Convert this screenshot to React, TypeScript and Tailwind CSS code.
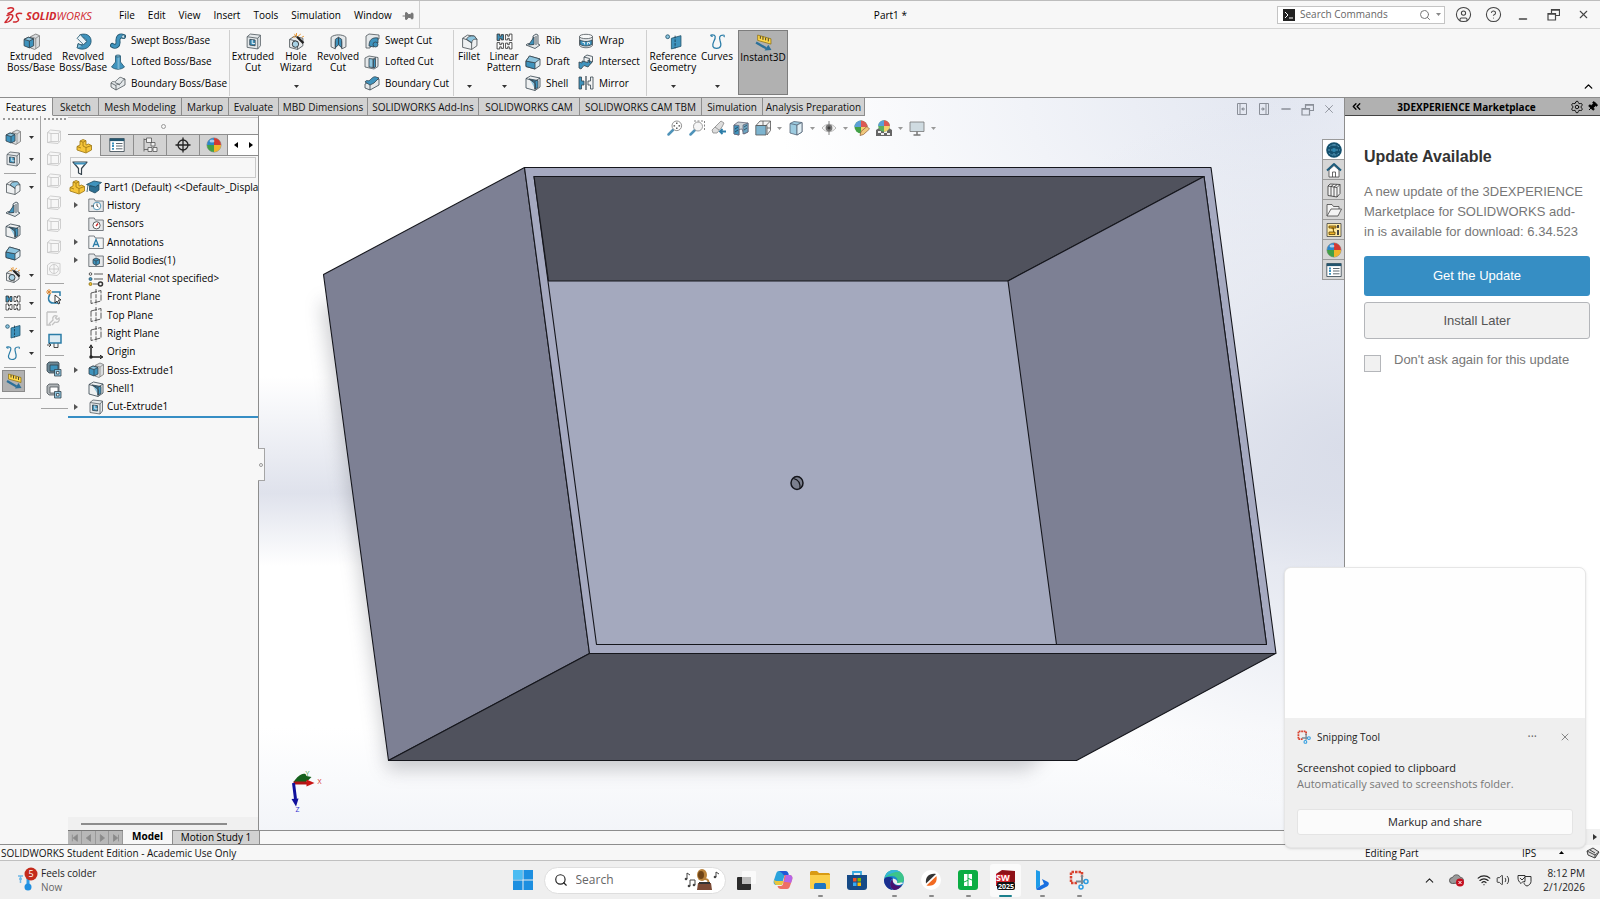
import React, { useState } from 'react';
import { ChevronUp, ChevronsLeft, CircleHelp, CircleUser, Minus, Pin, Search, Settings, Volume2, Wifi, X } from 'lucide-react';

const INK = '#34424c';
const BLUE = '#3f93bd';
const SKY = '#8cc4de';
const PALE = '#e4e8ea';

const ICONS = {
  extrude: (
    <g stroke={INK} strokeLinejoin="round">
      <path d="M7 3.500 12 1l3.500 1.500v10L11 15.500 7 14z" fill="#d9dcde" stroke="#777" />
      <path d="M12 5v10M12 5l3.500-2.500M12 5 7 3.500" fill="none" stroke="#888" />
      <path d="M1 6l4-2 5 1.500v6.500L6 14l-5-2z" fill={BLUE} />
      <path d="M1 6l4-2 5 1.500L6 7.500z" fill={SKY} />
      <path d="M6 7.500V14" />
    </g>
  ),
  revolve: (
    <g stroke="#23566f" strokeLinejoin="round">
      <path d="M5 1.500C12-.5 16 4 15 9c-1 5-7 8-13 5l1-4c3 2 7 1 7.500-2C11 5 8 4 5 5z" fill={BLUE} />
      <path d="M2 5l3-3.500L11 8l-3 3z" fill="#e8f3f8" />
      <path d="M2 14l1-4 4 2" fill={SKY} />
    </g>
  ),
  sweep: (
    <g fill="none" strokeLinecap="round">
      <path d="M2.500 12.500c3 2 6 0 5.500-4C7.500 4 10 2 13.500 3.500" stroke="#23566f" strokeWidth="5" />
      <path d="M2.500 12.500c3 2 6 0 5.500-4C7.500 4 10 2 13.500 3.500" stroke={BLUE} strokeWidth="3.200" />
      <circle cx="13.300" cy="3.600" r="1.600" fill="#cfe5f0" stroke="#23566f" strokeWidth=".6" />
    </g>
  ),
  loft: (
    <g stroke="#23566f" strokeLinejoin="round">
      <path d="M5.500 2h5v6l4 5c-4 3-9 3-13 0l4-5z" fill={BLUE} />
      <path d="M8.500 2v13" stroke="#77b5d3" strokeWidth="2" />
      <ellipse cx="8" cy="2" rx="2.500" ry="1" fill={SKY} />
    </g>
  ),
  boundary: (
    <g stroke="#4d5459" strokeLinejoin="round">
      <path d="M1 8c2-3 3 0 5-2s4-5 6-3l3 1v6l-9 5-5-3z" fill={PALE} />
      <path d="M1 8l5 2.500c2-3 3 0 5-2.500 1-2 2-3 4-4M6 10.500V15M5 7.500l5 2.500" fill="none" />
    </g>
  ),
  boundaryCut: (
    <g stroke={INK} strokeLinejoin="round">
      <path d="M1 9l5-3 9-2v6l-9 5-5-2z" fill={PALE} />
      <path d="M1 7c2-3 3 0 5-2s4-4 6-3l3 1-5 5-4 2z" fill={BLUE} />
      <path d="M6 10v5" />
    </g>
  ),
  cut: (
    <g stroke="#555e64" strokeLinejoin="round">
      <path d="M2 3.500 5 1l9.500 1v10L12 15 2 13.500z" fill={PALE} />
      <path d="M2 3.500 12 5v10M12 5l2.500-3" fill="none" />
      <path d="M4.500 6l5 .6v5.400l-5-.6z" fill={BLUE} stroke={INK} />
      <path d="M6.800 6.500v3.400h2.600" fill="none" stroke="#fff" />
    </g>
  ),
  hole: (
    <g strokeLinejoin="round">
      <path d="M1.500 6 6 3l8 2v7l-5 3.500-7.500-2z" fill="#e9ebec" stroke="#4d5459" />
      <path d="M1.500 6 9 8v7.500" fill="none" stroke="#4d5459" />
      <circle cx="7" cy="10.500" r="3" fill="#a9d2e5" stroke="#222" />
      <path d="M8.500 3.500l6 6" stroke="#222" strokeWidth="2.200" />
      <path d="M8 0v3M4.500 3.500l2.500.5M6 .8 7.500 3M12 1l-2.500 2M13 4l2-1" stroke="#e88c1a" />
    </g>
  ),
  revolveCut: (
    <g stroke="#4d5459" strokeLinejoin="round">
      <path d="M1 4c3-3 11-3 14 0v9l-4 2V8L8 6 5 8v7l-4-2z" fill={PALE} />
      <path d="M5 6l3-2 3 2v8l-3-3-3 3z" fill={BLUE} stroke={INK} />
      <path d="M8 4v7" stroke={INK} />
    </g>
  ),
  sweepCut: (
    <g stroke="#4d5459" strokeLinejoin="round">
      <path d="M2 3l3-2 10 1v4l-6 1-3 8H2z" fill={PALE} />
      <path d="M5 13c0-6 3-9 9-8v5c-3-.5-4 1-4 4z" fill={BLUE} stroke={INK} />
      <circle cx="11.500" cy="11.500" r="2.500" fill={BLUE} stroke={INK} />
    </g>
  ),
  loftCut: (
    <g stroke="#4d5459" strokeLinejoin="round">
      <path d="M1 4l4-2 9 1.500v9L10 15l-9-2z" fill={PALE} />
      <path d="M5 4.500l4 .5v8.500L5 13zM9 5l3-1.500" fill={SKY} stroke={INK} />
      <path d="M9.500 5.500l2-1V13l-2 1z" fill={BLUE} stroke={INK} />
    </g>
  ),
  fillet: (
    <g stroke="#4d5459" strokeLinejoin="round">
      <path d="M1.500 5 6 2l6.500.8 2.500 3V12l-5 3.500-8.500-2z" fill="#eef0f1" />
      <path d="M5 6c1-2.500 3.500-3.500 7.500-3.200L15 6c-2.500-.5-4.500 0-5 3.500z" fill={SKY} />
      <path d="M1.500 5 6 6.500l4 2.500v6.500" fill="none" />
    </g>
  ),
  pattern: (
    <g fill="#fff" stroke="#333" strokeLinejoin="round">
      <path d="M1 1h2.500v2H5V1.500h2v5H5V5H3.500v2H1z" fill={BLUE} />
      <path d="M15 1h-2.500v2H11V1.500H9v5h2V5h1.500v2H15z" />
      <path d="M1 9h2.500v2H5V9.500h2v5H5V13H3.500v2H1z" />
      <path d="M15 9h-2.500v2H11V9.500H9v5h2V13h1.500v2H15z" />
    </g>
  ),
  rib: (
    <g stroke={INK} strokeLinejoin="round">
      <path d="M8 3l3-2 2 1v9l2 1-5 3.500L1 12l2-1.500 5 1z" fill={PALE} />
      <path d="M9 4v7.500L3.500 12z" fill={BLUE} />
      <path d="M11 3v9" fill="none" />
    </g>
  ),
  draft: (
    <g stroke={INK} strokeLinejoin="round">
      <path d="M1 7l3.500-5 10.500 3v6.500L10 15 1 12.500z" fill="#d9e9f1" />
      <path d="M1 7l9 1.800V15l-9-2.500z" fill={BLUE} />
      <path d="M1 7l3.500-5L15 5l-5 3.800z" fill={SKY} />
    </g>
  ),
  shell: (
    <g stroke={INK} strokeLinejoin="round">
      <path d="M1 3.500 5.500 1 15 3v9l-5 3.500L1 13z" fill="#eef0f1" />
      <path d="M4.500 4 13 5.500v7L10 14V8.500z" fill={BLUE} />
      <path d="M4.500 4 10 8.500V14" fill={SKY} />
      <path d="M1 3.500l9 2.800V15.500M10 6.300 15 3" fill="none" />
    </g>
  ),
  wrap: (
    <g stroke="#4d5459">
      <path d="M1.500 3.500v9c2 3 11 3 13 0v-9z" fill={PALE} />
      <ellipse cx="8" cy="3.500" rx="6.500" ry="2.200" fill="#f7f8f8" />
      <path d="M2 7c4 2 8 2 12 0v4.500c-4 2-8 2-12 0z" fill={BLUE} stroke={INK} />
      <path d="M4.500 9.500h2v2M9.500 11.500v-2h2v1.500" stroke="#fff" fill="none" />
    </g>
  ),
  intersect: (
    <g stroke={INK} strokeLinejoin="round">
      <path d="M6 3l3-2 5.500 1.500V8L12 10 6 8.500z" fill="#eef0f1" />
      <path d="M1 8l3 1V7l6 1.500V6l4 2-4 5-4-1.500L3 15l-2-1z" fill={BLUE} />
      <path d="M6 3l5.500 1.500V9" fill="none" />
    </g>
  ),
  mirror: (
    <g stroke={INK}>
      <path d="M1 2h2.500v4H6v4H3.500v4H1z" fill={BLUE} />
      <path d="M8 1v14" strokeWidth="1.200" />
      <path d="M15 2h-2.500v4H10v4h2.500v4H15z" fill="#f2f2f2" />
    </g>
  ),
  refgeo: (
    <g stroke="#23566f" strokeLinejoin="round">
      <circle cx="2.500" cy="3.500" r="1.800" fill={SKY} />
      <path d="M6 5l9-2.500v10L6 15z" fill={BLUE} />
      <path d="M9.500 2.500v12" stroke="#16394b" strokeDasharray="2.500 1" />
    </g>
  ),
  curves: (
    <g fill="none" stroke="#2b7da8" strokeWidth="1.200">
      <path d="M1.500 2C7 1 6.500 4 4.500 8c-2 4-1 6.500 2.500 6.500 5 0 4.500-4 3.500-7C9.500 4 9.500 2 13.500 2" />
      <path d="M1.500 2c.5 1 1.500 1.200 2 1.200M13.500 2c1 0 1 1 .5 1.800" />
    </g>
  ),
  instant: (
    <g strokeLinejoin="round">
      <path d="M2.500 1 15 4.500v5L2.500 6z" fill="#ffd84a" stroke="#8a6d10" strokeWidth=".7" />
      <path d="M5 2v2.500M7.500 2.500v3M10 3.500v2.500M12.500 4v3" stroke="#222" />
      <path d="M1 8l9.500 5.500" stroke="#2c7099" strokeWidth="2.200" />
      <path d="M9 15.500l6.500-.5-3-5z" fill="#2c7099" />
    </g>
  ),
  wire: (
    <g fill="none" stroke="#c4c4c4" strokeLinejoin="round">
      <path d="M1.500 3.500 4.500 1l10 1v9.500L12 14.500l-10.500-1z" />
      <path d="M5 4.500h7.500v8H5zM1.500 3.500 5 4.500M12.500 4.500l2-2.500M1.500 13.500l3.500-1" />
    </g>
  ),
  wireRound: (
    <g fill="none" stroke="#c4c4c4">
      <path d="M1.500 4 5 1.500l9 1V12l-3 2.500-9.500-1z" />
      <circle cx="8" cy="8" r="4.500" />
      <path d="M8 3.500v9M3.500 8h9" />
    </g>
  ),
  selectSketch: (
    <g fill="none">
      <path d="M4 5c-3 5-1 9 3 9h7M6 3h8v4" stroke="#2b7da8" strokeWidth="1.500" />
      <path d="M3 0v6M0 3h6M1 1l4 4M5 1 1 5" stroke="#d9822b" strokeWidth=".9" />
      <path d="M9 6v8l2-2 1.500 3 1.200-.8L12.500 11H15z" fill="#fff" stroke="#222" strokeWidth=".9" />
    </g>
  ),
  repair: (
    <g fill="none" stroke="#c2c2c2" strokeWidth="1.300">
      <path d="M1 1h10M1 1v13h4M3 13l4-4c-1-3 1-5 4-4L9.500 7l1.500 1.500L13 7c1 3-1 5-4 4l-3 3" />
    </g>
  ),
  screen: (
    <g fill="none">
      <path d="M3 1.500h12v8.500H3z" fill="#dcebf3" stroke="#2b7da8" strokeWidth="1.500" />
      <path d="M1 12h4m-2-2 2 2-2 2M8 10.500v4h4v-4" stroke="#222" />
    </g>
  ),
  copyBlue: (
    <g stroke={INK}>
      <path d="M1 3l2-2h9l1 1v7l-4 3H3l-2-2z" fill="#6d8895" />
      <path d="M4 4h8v6H4z" fill={BLUE} />
      <path d="M8.500 8.500h6.500V15H8.500z" fill={SKY} />
      <path d="M10.500 10.500H13V13h-2.500z" fill="#fff" />
    </g>
  ),
  copyWhite: (
    <g stroke="#4d5459">
      <path d="M1 3l2-2h9l1 1v7l-4 3H3l-2-2z" fill="#aeb3b6" />
      <path d="M4 4h8v6H4z" fill="#fff" />
      <path d="M8.500 8.500h6.500V15H8.500z" fill={SKY} stroke={INK} />
      <path d="M10.500 10.500H13V13h-2.500z" fill="#fff" stroke={INK} />
    </g>
  ),
  part: (
    <g stroke="#9a7410" strokeLinejoin="round">
      <path d="M1 8.500 4 7V3l3-1.500 3 1.200V7l2.500-1 3 1.500v4.500L10 15 1 12z" fill="#f5c53a" />
      <path d="M4 3l3 1.200V8l3 1.500v5M7 4.200l3-1.500M10 9.500l5.500-2M1 8.500l4 1.500" fill="none" />
    </g>
  ),
  list: (
    <g stroke={INK}>
      <path d="M.8 1.500h14.400v13H.8z" fill="#fff" />
      <path d="M.8 2.800h14.400" stroke="#23566f" strokeWidth="2.600" />
      <path d="M3 6.500h2M3 9h2M3 11.800h2" stroke={BLUE} strokeWidth="1.800" />
      <path d="M7 6.500h6.500M7 9h6.500M7 11.800h6.500" />
    </g>
  ),
  config: (
    <g fill="#f2f2f2" stroke="#555">
      <path d="M2 1.500v13M2 2.500h3M2 12.500h4" fill="none" />
      <path d="M4.500 1h5v4.500h-5zM9 5.500h4v3.500H9zM6 10.500h4v4H6zM11 10.500h4v4h-4z" />
    </g>
  ),
  target: (
    <g fill="none" stroke="#222" strokeWidth="1.300">
      <circle cx="8" cy="8" r="5" />
      <path d="M8 .5v15M.5 8h15" />
    </g>
  ),
  sphere: (
    <g>
      <circle cx="8" cy="8" r="7" fill="#f3f3f3" stroke="#555" strokeWidth=".6" />
      <path d="M8 8V1a7 7 0 0 0-7 7z" fill="#2e86c8" />
      <path d="M8 8V1a7 7 0 0 1 7 7z" fill="#d33a32" />
      <path d="M8 8h7a7 7 0 0 1-7 7z" fill="#f0b429" />
      <path d="M8 8v7a7 7 0 0 1-7-7z" fill="#42a046" />
      <ellipse cx="6" cy="4" rx="2.500" ry="1.500" fill="#fff" opacity=".6" />
    </g>
  ),
  spherePencil: (
    <g>
      <circle cx="7" cy="7" r="6.500" fill="#42a046" />
      <path d="M7 7V.5A6.500 6.500 0 0 0 .5 7z" fill="#5b9fd8" />
      <path d="M7 7V.5A6.500 6.500 0 0 1 13.500 7z" fill="#dc5a53" />
      <path d="M7 7h6.500A6.500 6.500 0 0 1 7 13.500z" fill="#f4d06a" />
      <path d="M6 15.500l1-4 6-5 2.500 2.500-6 5.500z" fill="#f0c77c" stroke="#8c5a34" strokeWidth=".7" />
    </g>
  ),
  sphereScene: (
    <g>
      <path d="M0 10l3-2h10l3 2v6H0z" fill="#666" />
      <path d="M2 11h3v2H2zM8 11h3v2H8zM5 13h3v2H5zM11 13h3v2h-3z" fill="#eee" />
      <circle cx="8" cy="6" r="5.800" fill="#5bb05f" />
      <path d="M8 6V.2A5.800 5.800 0 0 0 2.200 6z" fill="#5b9fd8" />
      <path d="M8 6V.2A5.800 5.800 0 0 1 13.800 6z" fill="#dc5a53" />
      <path d="M8 6h5.800A5.800 5.800 0 0 1 8 11.800z" fill="#f4d06a" />
    </g>
  ),
  funnel: (
    <g strokeLinejoin="round">
      <path d="M1 2h14l-5.500 6.500v6L6.500 13V8.500z" fill="#fff" stroke={INK} strokeWidth="1.200" />
      <path d="M1.500 2.500h13L13 4.500H3z" fill={BLUE} />
    </g>
  ),
  cap: (
    <g stroke="#1e4a60" strokeLinejoin="round">
      <path d="M3.500 7v4.500L9 14l4-3V6z" fill="#2d6f91" />
      <path d="M.5 5.500 8 2l7.500 1.500L9.500 8z" fill={BLUE} />
      <path d="M2 6 1 13" fill="none" />
    </g>
  ),
  history: (
    <g>
      <path d="M.8 2h5.500l1 2h8v10.500H.8z" fill="#e6e8ea" stroke="#5a6167" />
      <circle cx="9" cy="9" r="3.800" fill="#fff" stroke="#2b7da8" />
      <path d="M9 6.500V9l1.500 1M3 9h3" fill="none" stroke="#222" />
    </g>
  ),
  sensors: (
    <g>
      <path d="M.8 2h5.500l1 2h8v10.500H.8z" fill="#e6e8ea" stroke="#5a6167" />
      <circle cx="8.500" cy="9.300" r="3.600" fill="#fff" stroke="#333" />
      <path d="M8 10l2-2.500" stroke="#c22" strokeWidth="1.300" />
    </g>
  ),
  annotations: (
    <g>
      <path d="M.8 2h5.500l1 2h8v10.500H.8z" fill="#f3f5f6" stroke="#5a6167" />
      <path d="M5 13l3-7.500L11 13M6.200 10.500h3.600" fill="none" stroke="#2b7da8" strokeWidth="1.300" />
    </g>
  ),
  bodies: (
    <g>
      <path d="M.8 2h5.500l1 2h8v10.500H.8z" fill="#e6e8ea" stroke="#5a6167" />
      <path d="M5 7.500 8 6l3.500 1.500v4L8 13.500l-3-2z" fill={BLUE} stroke={INK} />
      <path d="M5 7.500 8 9l3.500-1.500M8 9v4" stroke={INK} fill="none" />
    </g>
  ),
  material: (
    <g fill="none" stroke="#333">
      <path d="M6 3h9M6 8h9M5 13h5" />
      <circle cx="2.500" cy="3" r="1.300" />
      <circle cx="2.500" cy="8" r="1.500" fill={BLUE} stroke="#23566f" />
      <circle cx="2.500" cy="13" r="1.500" fill="#f0c02c" stroke="#8a6d10" />
      <circle cx="12.500" cy="13" r="2" strokeWidth="1.500" />
    </g>
  ),
  plane: (
    <g fill="none" stroke="#333">
      <path d="M3 4 13 1.500V12L3 14.500z" strokeDasharray="6 1.200" />
      <path d="M8 0v16" strokeDasharray="4 1.200" />
    </g>
  ),
  origin: (
    <g fill="none" stroke="#222" strokeWidth="1.500">
      <path d="M3 2v11h11" />
      <path d="M1.200 4 3 .8 4.800 4M12 11.200l3 1.800-3 1.800" strokeWidth="1" />
      <circle cx="3" cy="13" r="1" />
    </g>
  ),
  zoomFit: (
    <g fill="none">
      <path d="M1.500 14.500 6 10" stroke="#4f93b9" strokeWidth="2.500" strokeLinecap="round" />
      <circle cx="9.800" cy="5.800" r="4.800" fill="#fff" stroke="#777" />
      <path d="M9.800 2.500v1.600M9.800 7.500v1.600M6.500 5.800h1.600M11.500 5.800h1.600" stroke="#444" strokeWidth="1.300" />
    </g>
  ),
  zoomArea: (
    <g fill="none">
      <path d="M5 1h10.500v10.500" stroke="#666" strokeDasharray="2 1.500" />
      <path d="M1.500 14.500 6 10" stroke="#4f93b9" strokeWidth="2.500" strokeLinecap="round" />
      <circle cx="9" cy="6.500" r="4.500" fill="#f5f5f5" stroke="#888" />
    </g>
  ),
  prevView: (
    <g>
      <path d="M1 10 10 1l3 2-2 4-5 6H2z" fill="#ddd" stroke="#888" />
      <path d="M4 7l4 3" stroke="#888" />
      <path d="M9 11.500h6M11.500 9l-2.500 2.500 2.500 2.500" stroke="#2b7da8" strokeWidth="1.800" fill="none" />
    </g>
  ),
  section: (
    <g stroke="#667" strokeLinejoin="round">
      <path d="M1 5l4-3 10 1v9l-4 2-2-5-3 .5V15l-5-1z" fill="#ccd3d7" />
      <path d="M1 5l5 .5V15l-5-1z" fill={BLUE} />
      <path d="M10 5l5-2v9l-5 2z" fill="#6ba6c3" />
      <path d="M11 7l3-2M11 10l3-2M2 9l3-2M2 12l3-2" stroke="#234" strokeWidth=".7" />
    </g>
  ),
  viewCube: (
    <g stroke="#555" strokeLinejoin="round">
      <path d="M5 1h10.500v9.500L12 15V5.500H1z" fill="#f3f3f3" />
      <path d="M.8 5.500H11V15H.8z" fill="#7db4cf" />
      <path d="M8 1v4M11 5.500 15.500 1M12 8h3.500" fill="none" />
    </g>
  ),
  display: (
    <g stroke="#567" strokeLinejoin="round">
      <path d="M2 3.500 6 1.500l8 1V12l-5 3-7-2z" fill="#9ccbe0" />
      <path d="M2 3.500 9 5v10M9 5l5-2.500" fill="none" />
      <path d="M9 5l5-2.500V12l-5 3z" fill="#e1eef4" />
    </g>
  ),
  eye: (
    <g>
      <path d="M1 8c4-5 10-5 14 0-4 5-10 5-14 0z" fill="#f2f2f2" stroke="#aaa" />
      <circle cx="8" cy="8" r="3.400" fill="#777" />
      <circle cx="8" cy="8" r="1.400" fill="#222" />
      <path d="M8 1v14" stroke="#666" strokeWidth=".8" />
    </g>
  ),
  monitor: (
    <g>
      <path d="M1 2h14v9.500H1z" fill="#cfdbe1" stroke="#777" />
      <path d="M8 11.500V15M4.500 15h7" stroke="#777" strokeWidth="1.500" />
    </g>
  ),
  globe: (
    <g>
      <circle cx="8" cy="8" r="7.800" fill="#14506e" />
      <path d="M3 5c3-3 7-3 10 0M3 11c3 3 7 3 10 0M2 8h4M10 8h4M8 2v3M8 11v3" stroke="#6fb3d3" fill="none" strokeDasharray="2 1" />
      <circle cx="8" cy="8" r="2" fill="#2f86ad" />
    </g>
  ),
  home: (
    <g strokeLinejoin="round">
      <path d="M3 8v7h10V8L8 3.500z" fill="#fff" stroke="#444" />
      <path d="M6.500 15v-5h3v5" fill="none" stroke="#444" />
      <path d="M1 8.500 8 2l7 6.500" fill="none" stroke="#1f5d7c" strokeWidth="2" />
    </g>
  ),
  books: (
    <g fill="#f4f4f4" stroke="#333" strokeLinejoin="round">
      <path d="M2 4l2-2 10 .5v9L11 15l-9-1.500z" />
      <path d="M5 4.500V14M8 5v9.500M11 5.500V15M2 4l9 1.500L14 2.500M5 4.500l2.500-2M8 5l3-2.300" fill="none" />
    </g>
  ),
  openFolder: (
    <g fill="#f4f4f4" stroke="#444" strokeLinejoin="round">
      <path d="M1 14V2.500h5l1.500 2H13V7" />
      <path d="M1 14 5 7h10.500L12 14z" />
    </g>
  ),
  palette: (
    <g>
      <path d="M1 1.500h14v13H1z" fill="#ffe9a0" stroke="#444" />
      <path d="M3 4h7v2H3zM5.500 6h2v4M3 10h6v2.500H3z" fill="#f0b429" stroke="#5a4307" />
      <path d="M12 3v3M12 8v5" stroke="#444" strokeWidth="2" />
    </g>
  ),
};

type IconName = keyof typeof ICONS;

const Icon = ({ name, size = 16 }: { name: IconName; size?: number }) => (
  <svg width={size} height={size} viewBox="0 0 16 16" strokeWidth=".8" className="shrink-0">
    {ICONS[name]}
  </svg>
);

const Caret = ({ className = 'text-[#333]' }: { className?: string }) => (
  <svg width="5" height="3" viewBox="0 0 5 3" className={`shrink-0 ${className}`}>
    <path d="M0 0h5L2.500 3z" fill="currentColor" />
  </svg>
);

const RestoreIcon = () => (
  <svg width="13" height="13" viewBox="0 0 13 13" fill="none" stroke="currentColor" strokeWidth="1.200">
    <path d="M1 5.500h7.500V12H1zM1 6.200h7.500M4.500 5V1.500h8v6H9M4.500 2.200h8" />
  </svg>
);

const MENUS = ['File', 'Edit', 'View', 'Insert', 'Tools', 'Simulation', 'Window'];

const TitleBar = () => (
  <header className="flex h-[29px] shrink-0 items-center border-t border-b border-t-[#bdbdbd] border-b-[#d4d4d4]">
    <div className="flex h-full items-center border-r border-[#cfcfcf] pt-[2px] pr-[5px] pl-1">
      <svg width="19" height="18" viewBox="0 0 19 18" fill="none" stroke="#d0282e" strokeWidth="1.500" strokeLinecap="round" strokeLinejoin="round">
        <path d="M4 1.500c3-1.500 7-.5 5 2-1 1.500-3 2.500-5 3" />
        <path d="M3 8.500c5-2 7-.5 5 3-1.500 2.500-3.500 4-7 4 1.500-2 3-3.500 4-5.500" />
        <path d="M17.500 6.500c-4-1-6.500 1-4.500 3.500s2.500 4-1 5H9.500" />
      </svg>
      <div className="ml-[3px] w-[71px] text-[11px] leading-none text-[#d0282e] italic">
        <b>SOLID</b>WORKS
      </div>
      <nav className="ml-[22px] flex items-center gap-[13px]">
        {MENUS.map((menu) => (
          <button key={menu} className="text-[10px]">{menu}</button>
        ))}
      </nav>
      <button aria-label="Pin menu" className="ml-[10px] rotate-90 text-[#777]"><Pin size={12} fill="currentColor" /></button>
    </div>
    <div className="flex-1 pt-[1px] pl-[84px] text-center text-[10px]">Part1 *</div>
    <label className="flex h-[18px] w-[168px] items-center border border-[#c4c4c4] bg-white pr-[3px] pl-[5px]">
      <svg width="12" height="12" viewBox="0 0 12 12">
        <rect width="12" height="12" fill="#222" />
        <path d="M2 3l3 3-3 3M6 9h4" fill="none" stroke="#fff" />
      </svg>
      <input aria-label="Search Commands" placeholder="Search Commands" className="ml-[5px] min-w-0 flex-1 text-[10px] outline-none placeholder:text-[#666]" />
      <Search size={12} className="mr-[5px] text-[#777]" />
      <Caret className="text-[#888]" />
    </label>
    <div className="mr-[2px] ml-[3px] flex items-center text-[#444]">
      <button aria-label="Account" className="flex w-[30px] justify-center"><CircleUser size={17} strokeWidth={1.500} /></button>
      <button aria-label="Help" className="flex w-[30px] justify-center"><CircleHelp size={17} strokeWidth={1.500} /></button>
      <button aria-label="Minimize" className="flex w-[30px] justify-center pt-2"><Minus size={12} strokeWidth={3} /></button>
      <button aria-label="Restore" className="flex w-[30px] justify-center"><RestoreIcon /></button>
      <button aria-label="Close" className="flex w-[30px] justify-center"><X size={13} strokeWidth={2} /></button>
    </div>
  </header>
);

interface BigButtonProps {
  icon: IconName;
  lines: string[];
  width: string;
  menu?: boolean;
  active?: boolean;
}

const BigButton = ({ icon, lines, width, menu, active }: BigButtonProps) => (
  <button className={`flex h-full flex-col items-center pt-[3px] ${width} ${active ? 'border border-[#7d7d7d] bg-[#b1b1b1]' : ''}`}>
    <Icon name={icon} size={17} />
    <span className="mt-[1px] h-[22px] text-[10px] leading-[11px] whitespace-nowrap">
      {lines.map((line) => (
        <span key={line} className="block">{line}</span>
      ))}
    </span>
    {menu && <span className="mt-[12px]"><Caret /></span>}
  </button>
);

const SmallStack = ({ items, width }: { items: [IconName, string][]; width: string }) => (
  <div className={`flex h-full flex-col justify-around pb-[2px] ${width}`}>
    {items.map(([icon, label]) => (
      <button key={label} className="flex items-center gap-[5px] text-[10px] whitespace-nowrap">
        <Icon name={icon} />
        {label}
      </button>
    ))}
  </div>
);

const Ribbon = () => (
  <div className="flex h-[69px] shrink-0 border-b border-[#8d8d8d] py-[1px]">
    <div className="flex border-r border-[#cfcfcf] pl-[5px]">
      <BigButton icon="extrude" lines={['Extruded', 'Boss/Base']} width="w-[52px]" />
      <BigButton icon="revolve" lines={['Revolved', 'Boss/Base']} width="w-[52px]" />
      <SmallStack width="w-[120px] pl-[1px]" items={[['sweep', 'Swept Boss/Base'], ['loft', 'Lofted Boss/Base'], ['boundary', 'Boundary Boss/Base']]} />
    </div>
    <div className="flex border-r border-[#cfcfcf]">
      <BigButton icon="cut" lines={['Extruded', 'Cut']} width="w-[46px]" />
      <BigButton icon="hole" lines={['Hole', 'Wizard']} width="w-[40px]" menu />
      <BigButton icon="revolveCut" lines={['Revolved', 'Cut']} width="w-[44px]" />
      <SmallStack width="w-[93px] pl-[4px]" items={[['sweepCut', 'Swept Cut'], ['loftCut', 'Lofted Cut'], ['boundaryCut', 'Boundary Cut']]} />
    </div>
    <div className="flex border-r border-[#cfcfcf]">
      <BigButton icon="fillet" lines={['Fillet']} width="w-[30px]" menu />
      <BigButton icon="pattern" lines={['Linear', 'Pattern']} width="w-[40px]" menu />
      <SmallStack width="w-[54px] pl-[1px]" items={[['rib', 'Rib'], ['draft', 'Draft'], ['shell', 'Shell']]} />
      <SmallStack width="w-[68px]" items={[['wrap', 'Wrap'], ['intersect', 'Intersect'], ['mirror', 'Mirror']]} />
    </div>
    <div className="flex">
      <BigButton icon="refgeo" lines={['Reference', 'Geometry']} width="w-[52px]" menu />
      <BigButton icon="curves" lines={['Curves']} width="w-[36px]" menu />
    </div>
    <div className="ml-[3px] flex h-[65px]">
      <BigButton icon="instant" lines={['Instant3D']} width="w-[50px]" active />
    </div>
    <button aria-label="Collapse ribbon" className="mt-auto mr-[5px] mb-[3px] ml-auto"><ChevronUp size={13} strokeWidth={2.500} /></button>
  </div>
);

const RIBBON_TABS = [
  { label: 'Features', width: 'w-[53px]' },
  { label: 'Sketch', width: 'w-[46px]' },
  { label: 'Mesh Modeling', width: 'w-[83px]' },
  { label: 'Markup', width: 'w-[47px]' },
  { label: 'Evaluate', width: 'w-[50px]' },
  { label: 'MBD Dimensions', width: 'w-[89px]' },
  { label: 'SOLIDWORKS Add-Ins', width: 'w-[111px]' },
  { label: 'SOLIDWORKS CAM', width: 'w-[101px]' },
  { label: 'SOLIDWORKS CAM TBM', width: 'w-[122px]' },
  { label: 'Simulation', width: 'w-[61px]' },
  { label: 'Analysis Preparation', width: 'w-[102px]' },
];

const PaneIcon = ({ flip }: { flip?: boolean }) => (
  <svg width="14" height="14" viewBox="0 0 14 14" fill="none" stroke="currentColor" className={flip ? '-scale-x-100' : ''}>
    <path d="M2.500 1.500h9v11h-9zM9 1.500v11M4 7h2" />
    <path d="M5.500 5 8 7 5.500 9z" fill="currentColor" stroke="none" />
  </svg>
);

const RibbonTabs = () => {
  const [active, setActive] = useState('Features');
  return (
    <div className="flex h-[18px] shrink-0 items-stretch">
      {RIBBON_TABS.map(({ label, width }) => (
        <button
          key={label}
          onClick={() => setActive(label)}
          className={`shrink-0 border-r border-b text-[10px] leading-none whitespace-nowrap ${width} ${
            active === label ? 'border-r-[#8d8d8d] border-b-transparent bg-[#f7f7f7] text-black' : 'border-[#8d8d8d] bg-[#d2d2d2] text-[#111]'
          }`}
        >
          {label}
        </button>
      ))}
      <div className="mr-[8px] ml-auto flex items-end gap-[8px] text-[#8a8f98]">
        <button aria-label="Previous pane"><PaneIcon flip /></button>
        <button aria-label="Next pane"><PaneIcon /></button>
        <button aria-label="Minimize document" className="pt-2"><Minus size={14} strokeWidth={2.500} /></button>
        <button aria-label="Restore document"><RestoreIcon /></button>
        <button aria-label="Close document"><X size={14} strokeWidth={1.500} /></button>
      </div>
    </div>
  );
};

type Tool = { icon: IconName; menu?: boolean; active?: boolean } | null;

const FEATURE_TOOLS: Tool[] = [
  { icon: 'extrude', menu: true }, { icon: 'cut', menu: true }, null,
  { icon: 'fillet', menu: true }, { icon: 'rib' }, { icon: 'shell' }, { icon: 'draft' }, { icon: 'hole', menu: true }, null,
  { icon: 'pattern', menu: true }, null,
  { icon: 'refgeo', menu: true }, { icon: 'curves', menu: true }, null,
  { icon: 'instant', active: true },
];

const VIEW_TOOLS: Tool[] = [
  { icon: 'wire' }, { icon: 'wire' }, { icon: 'wire' }, { icon: 'wire' }, { icon: 'wire' }, { icon: 'wire' }, { icon: 'wireRound' }, null,
  { icon: 'selectSketch' }, { icon: 'repair' }, { icon: 'screen' }, null,
  { icon: 'copyBlue' }, { icon: 'copyWhite' },
];

const ToolColumn = ({ tools, className }: { tools: Tool[]; className: string }) => (
  <div className={`flex shrink-0 flex-col self-start border-b border-[#a5a5a5] pt-[2px] pb-[6px] ${className}`}>
    <div className="mr-[2px] mb-[6px] ml-[3px] h-[2px] border-t-2 border-dotted border-[#999]" />
    {tools.map((tool, i) =>
      tool ? (
        <button
          key={i}
          aria-label={tool.icon}
          className={`flex h-[22px] items-center ${tool.active ? 'ml-[2px] w-[23px] justify-center border border-[#8a8a8a] bg-[#b1b1b1]' : 'pl-[5px]'}`}
        >
          <Icon name={tool.icon} />
          {tool.menu && <span className="ml-[8px]"><Caret /></span>}
        </button>
      ) : (
        <div key={i} className="mx-1 mt-[3px] mb-[2px] h-px bg-[#a5a5a5]" />
      ),
    )}
  </div>
);

const TREE: { label: string; icon: IconName; open?: boolean }[] = [
  { label: 'History', icon: 'history', open: true },
  { label: 'Sensors', icon: 'sensors' },
  { label: 'Annotations', icon: 'annotations', open: true },
  { label: 'Solid Bodies(1)', icon: 'bodies', open: true },
  { label: 'Material <not specified>', icon: 'material' },
  { label: 'Front Plane', icon: 'plane' },
  { label: 'Top Plane', icon: 'plane' },
  { label: 'Right Plane', icon: 'plane' },
  { label: 'Origin', icon: 'origin' },
  { label: 'Boss-Extrude1', icon: 'extrude', open: true },
  { label: 'Shell1', icon: 'shell' },
  { label: 'Cut-Extrude1', icon: 'cut', open: true },
];

const PANEL_TABS: { icon: IconName; className: string }[] = [
  { icon: 'part', className: 'w-[33px]' },
  { icon: 'list', className: 'w-[33px] border-b bg-[#d2d2d2]' },
  { icon: 'config', className: 'w-[33px] border-b bg-[#d2d2d2]' },
  { icon: 'target', className: 'w-[33px] border-b bg-[#d2d2d2]' },
  { icon: 'sphere', className: 'flex-1 border-b bg-[#d2d2d2]' },
];

const FeatureTree = () => (
  <aside className="flex w-[190px] shrink-0 flex-col">
    <div className="mt-[1px] flex h-[17px] items-center justify-center border-t border-[#c9c9c9]">
      <span className="size-[5px] rounded-full border border-[#999]" />
    </div>
    <div className="flex h-[22px] border-t border-[#8d8d8d]">
      {PANEL_TABS.map(({ icon, className }) => (
        <button key={icon} aria-label={icon} className={`flex min-w-0 items-center justify-center border-r border-[#8d8d8d] ${className}`}>
          <Icon name={icon} />
        </button>
      ))}
      <div className="flex w-[30px] items-center justify-around border-b border-[#8d8d8d] bg-white">
        <button aria-label="Scroll tabs left"><svg width="4" height="6"><path d="M4 0v6L0 3z" /></svg></button>
        <button aria-label="Scroll tabs right"><svg width="4" height="6"><path d="M0 0v6l4-3z" /></svg></button>
      </div>
    </div>
    <label className="mt-[1px] mr-[2px] ml-[2px] flex h-[21px] items-center border border-[#c9c9c9] pl-[1px]">
      <Icon name="funnel" />
      <input aria-label="Filter" className="min-w-0 flex-1 pl-1 text-[10px] outline-none" />
    </label>
    <ul className="grid h-[240px] auto-rows-fr border-b-2 border-[#368ec4] text-[10px]">
      <li className="flex items-center pl-[1px] whitespace-nowrap">
        <Icon name="part" />
        <span className="ml-[1px] flex"><Icon name="cap" /></span>
        <span className="ml-[2px]">Part1 (Default) &lt;&lt;Default&gt;_Displa</span>
      </li>
      {TREE.map((node) => (
        <li key={node.label} className="flex items-center whitespace-nowrap">
          <span className="flex w-[20px] pl-[6px]">
            {node.open && <svg width="4" height="6" viewBox="0 0 4 6"><path d="M0 0v6l4-3z" fill="#555" /></svg>}
          </span>
          <Icon name={node.icon} />
          <span className="ml-[3px]">{node.label}</span>
        </li>
      ))}
    </ul>
    <div className="mt-auto flex h-[13px] items-center bg-[#f0f0f0] px-[13px]">
      <div className="h-[2px] w-[146px] bg-[#8c8c8c]" />
    </div>
  </aside>
);

const HEADS_UP: { icon: IconName; menu?: boolean }[] = [
  { icon: 'zoomFit' }, { icon: 'zoomArea' }, { icon: 'prevView' }, { icon: 'section' }, { icon: 'viewCube', menu: true },
  { icon: 'display', menu: true }, { icon: 'eye', menu: true }, { icon: 'spherePencil' }, { icon: 'sphereScene', menu: true },
  { icon: 'monitor', menu: true },
];

const HeadsUpToolbar = () => (
  <div className="absolute inset-x-0 top-[4px] flex justify-center gap-[6px]">
    {HEADS_UP.map(({ icon, menu }) => (
      <button key={icon} aria-label={icon} className="flex items-center gap-[6px]">
        <Icon name={icon} />
        {menu && <Caret className="text-[#999]" />}
      </button>
    ))}
  </div>
);

const TASK_TABS: IconName[] = ['globe', 'home', 'books', 'openFolder', 'palette', 'sphere', 'list'];

const Viewport = () => (
  <main className="relative min-w-0 flex-1 border-l border-[#8d8d8d]">
    <svg viewBox="260 116 1084 714" preserveAspectRatio="xMidYMid meet" className="absolute inset-0 h-full w-full" strokeLinejoin="round">
      <defs>
        <filter id="soft" x="-10%" y="-10%" width="120%" height="120%">
          <feGaussianBlur stdDeviation="9" />
        </filter>
      </defs>
      <path d="M322 300 388 770h640l60-60L600 400z" fill="#70727c" opacity=".35" filter="url(#soft)" />
      <g stroke="#15161c" strokeWidth="1.100">
        <path d="M525 167.500 324 274.500 389 760.500 590 653.500z" fill="#7d8094" />
        <path d="M590 653.500 389 760.500h688l199-107z" fill="#50525d" />
        <path d="M525 167.500h686.500l65 486H590z" fill="#a5a9c0" />
        <path d="M534.500 176.500h670l62.500 468H597z" fill="#a4a9be" />
        <path d="M534.500 176.500h670L1008.500 281H549z" fill="#50525d" />
        <path d="M1204.500 176.500 1008.500 281l48.500 363.500h210z" fill="#7d8094" />
        <ellipse cx="797.500" cy="483" rx="6" ry="6.500" fill="#7b7f8e" strokeWidth="1.500" />
        <path d="M794 478.500c5 1 7 5 6.500 10.500" fill="none" />
      </g>
      <path d="M294 782c4-5 7-9 12-8l1 2 5 1-3 3-4 3z" fill="#14601c" />
      <path d="M294 783h16" stroke="#b01414" strokeWidth="3" />
      <path d="M307 779.500l8 3.500-8 3.500z" fill="#c81414" />
      <path d="M294 783l2 16" stroke="#10109c" strokeWidth="3" />
      <path d="M292 799l7-.5-2.500 8z" fill="#10109c" />
      <g className="text-[7px]">
        <text x="306" y="776" fill="#3c9c46">Y</text>
        <text x="318" y="784" fill="#d42020">X</text>
        <text x="296" y="812" fill="#3030d0">Z</text>
      </g>
    </svg>
    <HeadsUpToolbar />
    <button aria-label="Toggle tree" className="absolute top-[332px] -left-[1px] flex h-[33px] w-[7px] items-center justify-center border border-l-0 border-[#a5a5a5] bg-[#f7f7f7]">
      <span className="size-[4px] rounded-full border border-[#999]" />
    </button>
    <nav className="absolute top-[23px] right-0 w-[22px] border-t border-l border-[#9a9a9a]">
      {TASK_TABS.map((icon, i) => (
        <button key={icon} aria-label={icon} className={`flex h-[20px] w-full items-center justify-center border-b border-[#9a9a9a] ${i === 0 ? 'bg-white' : 'bg-[#d6d6d6]'}`}>
          <Icon name={icon} />
        </button>
      ))}
    </nav>
  </main>
);

const BottomTabs = () => (
  <div className="flex h-[15px] shrink-0 border-b border-[#8d8d8d] bg-[#f7f7f7] text-[10px] leading-none">
    <div className="ml-[68px] flex w-[55px] border-t border-[#777] bg-[#b8b8b8] text-[#8a8a8a]">
      {['M4 2v8M10 2v8L5 6z', 'M9 2v8L4 6z', 'M4 2v8l5-4z', 'M9 2v8M3 2v8l5-4z'].map((d) => (
        <button key={d} aria-label="Scroll study tabs" className="flex flex-1 items-center justify-center border-r border-[#999]">
          <svg width="10" height="10" viewBox="0 0 12 12"><path d={d} fill="currentColor" stroke="currentColor" /></svg>
        </button>
      ))}
    </div>
    <button className="w-[49px] pb-[2px] font-bold">Model</button>
    <button className="w-[88px] border-x border-t border-[#8d8d8d] bg-[#d2d2d2] pb-[2px]">Motion Study 1</button>
    <div className="flex-1 border-t border-[#8d8d8d]" />
  </div>
);

const Marketplace = () => (
  <section className="flex w-[256px] shrink-0 flex-col border-l border-[#8d8d8d] bg-white font-['Liberation_Sans',sans-serif]">
    <div className="flex h-[18px] shrink-0 items-center border-b border-[#444] bg-[#b1b1b1] pr-[2px] pl-[5px] font-['Open_Sans',sans-serif]">
      <button aria-label="Collapse pane"><ChevronsLeft size={13} strokeWidth={2.500} /></button>
      <h2 className="flex-1 text-center text-[10px] leading-none font-bold">3DEXPERIENCE Marketplace</h2>
      <button aria-label="Settings"><Settings size={14} strokeWidth={1.500} /></button>
      <button aria-label="Pin pane" className="ml-[3px] rotate-45"><Pin size={11} fill="currentColor" /></button>
    </div>
    <div className="flex-1 px-[10px] pt-[31px] pl-[19px]">
      <h1 className="text-[16px] leading-[20px] font-bold text-[#333]">Update Available</h1>
      <p className="mt-[15px] text-[13px] leading-[20px] whitespace-nowrap text-[#777]">
        A new update of the 3DEXPERIENCE
        <br />
        Marketplace for SOLIDWORKS add-
        <br />
        in is available for download: 6.34.523
      </p>
      <button className="mt-[14px] block h-[40px] w-full rounded-[3px] bg-[#368ec4] text-[13px] text-white">Get the Update</button>
      <button className="mt-[6px] block h-[37px] w-full rounded-[3px] border border-[#b4b6ba] bg-[#f1f1f1] text-[13px] text-[#555]">Install Later</button>
      <label className="mt-[11px] flex items-start gap-[13px] text-[13px] leading-[20px] text-[#777]">
        <input type="checkbox" className="mt-[5px] size-[17px] shrink-0 appearance-none border border-[#b4b6ba] bg-[#f1f1f1] checked:bg-[#368ec4]" />
        Don't ask again for this update
      </label>
    </div>
    <div className="flex h-[16px] shrink-0 items-center justify-end bg-[#f0f0f0] pr-[3px]">
      <svg width="4" height="6"><path d="M0 0v6l4-3z" fill="#333" /></svg>
    </div>
  </section>
);

const SnipIcon = ({ size }: { size: number }) => (
  <svg width={size} height={size} viewBox="0 0 20 20" fill="none" className="shrink-0">
    <path d="M8 13H2V2h11v5" stroke="#d9432f" strokeWidth="2.500" strokeDasharray="2.500 1" />
    <path d="M13 5v9M7 11.500h8" stroke="#7c8a94" strokeWidth="2" />
    <circle cx="17" cy="11.500" r="2" stroke="#2b9be0" strokeWidth="1.500" />
    <circle cx="12" cy="17" r="2" stroke="#2b9be0" strokeWidth="1.500" />
  </svg>
);

const Notification = () => (
  <div className="absolute right-[14px] bottom-[51px] w-[302px] overflow-hidden rounded-[7px] border border-[#e6e6e6] bg-[#efefef] text-[#222] shadow-sm">
    <div className="h-[150px] bg-[#fefefe]" />
    <div className="px-[12px] pt-[10px] pb-[12px]">
      <div className="flex h-[18px] items-center text-[10px]">
        <SnipIcon size={14} />
        <span className="ml-[6px] flex-1">Snipping Tool</span>
        <button aria-label="More" className="text-[12px] leading-none text-[#666]">···</button>
        <button aria-label="Dismiss" className="mr-[2px] ml-[22px] text-[#666]"><X size={12} strokeWidth={1.500} /></button>
      </div>
      <p className="mt-[14px] text-[11px] leading-[16px]">Screenshot copied to clipboard</p>
      <p className="text-[11px] leading-[16px] text-[#777]">Automatically saved to screenshots folder.</p>
      <button className="mt-[17px] h-[26px] w-full rounded-[3px] border border-[#e4e4e4] bg-[#fbfbfb] text-[11px]">Markup and share</button>
    </div>
  </div>
);

const StatusBar = () => (
  <div className="flex h-[16px] shrink-0 items-center border-b border-[#c0c0c0] pl-[1px] text-[10px] leading-none text-[#111]">
    <span className="flex-1">SOLIDWORKS Student Edition - Academic Use Only</span>
    <span className="w-[157px]">Editing Part</span>
    <span className="w-[37px]">IPS</span>
    <svg width="5" height="3"><path d="M0 3h5L2.500 0z" /></svg>
    <svg width="14" height="12" viewBox="0 0 14 12" className="ml-[22px]" fill="#ddd" stroke="#444">
      <path d="M1 4l6-3 6 4-4 6-7-3z" />
      <path d="M1 4l8 4 4-3M9 8v3M4 3l5 3" fill="none" />
    </svg>
  </div>
);

const APPS: { label: string; running?: boolean; active?: boolean; art: React.ReactNode }[] = [
  {
    label: 'Task view',
    art: (
      <g>
        <rect x="6" y="1" width="14" height="13" rx="1" fill="#fafafa" />
        <rect x="1" y="7" width="14" height="13" rx="1" fill="#2b2b2b" />
        <rect x="6" y="7" width="9" height="7" fill="#bdbdbd" />
      </g>
    ),
  },
  {
    label: 'Copilot',
    art: (
      <g strokeLinejoin="round">
        <path d="M6 1h6c2 0 3 1 3.500 3H12L8.500 15H4c-3 0-4-2-3-5L3 4c.5-2 1.500-3 3-3z" fill="#2aa3dc" />
        <path d="M6 1h6c2 0 3 1 3.500 3L16 6h-3c-2 0-3-2-4-3z" fill="#2157d6" />
        <path d="M1 10c0 3 1 5 3 5h4c1.500 0 2-2 2.500-4L7 11c-3 0-5 0-6-1z" fill="#e9c53f" />
        <path d="M11.500 5H16c3 0 4 2 3 5l-2 6c-.5 2-1.500 3-3 3H8c-2 0-3-1-3.500-3L8 16c1 0 1.500-1 2-2z" fill="#ee6f66" />
        <path d="M13 5h3c3 0 4 2 3 5l-1 3c-2-1-4-1-7-1z" fill="#b565e8" />
      </g>
    ),
  },
  {
    label: 'File Explorer',
    running: true,
    art: (
      <g>
        <path d="M0 2.500C0 1.500 1 1 2 1h5l2 2h9c1 0 2 .5 2 1.500V17H0z" fill="#d99b14" />
        <path d="M0 5h20v13c0 1-1 1-2 1H2c-1 0-2 0-2-1z" fill="#fbcf4b" />
        <path d="M4 19v-4c0-1.500 1-2 2-2h8c1 0 2 .5 2 2v4z" fill="#1d75c4" />
      </g>
    ),
  },
  {
    label: 'Store',
    art: (
      <g>
        <path d="M6 6V2h8v4" fill="none" stroke="#36a8e0" strokeWidth="1.800" />
        <path d="M0 5h20v12c0 2-1 3-3 3H3c-2 0-3-1-3-3z" fill="#164a86" />
        <path d="M6 8h3.500v3.500H6z" fill="#f25022" />
        <path d="M10.500 8H14v3.500h-3.500z" fill="#7fba00" />
        <path d="M6 12.500h3.500V16H6z" fill="#38a9f0" />
        <path d="M10.500 12.500H14V16h-3.500z" fill="#ffb900" />
      </g>
    ),
  },
  {
    label: 'Edge',
    running: true,
    art: (
      <g>
        <circle cx="10" cy="10" r="10" fill="#1a86d0" />
        <path d="M.5 8C2 2 6 0 10 0c6 0 10 4 10 9 0 4-4 5-7 4 2-4-1-7-5-7-4 0-6 1-7.500 2z" fill="#3cc48a" />
        <path d="M.5 8C2 2 6 0 10 0c3 0 5 1 6.500 2.500C11 1 5 4 .5 8z" fill="#35b5d8" />
        <path d="M0 10c0 6 5 10 9 10-3-2-5-9 0-12-4-2-9-1-9 2z" fill="#1b2f8f" />
        <path d="M9 9c-1 5 3 8 9 6-1.500 3-5 5-8 5-5-2-5-9-1-11z" fill="#4b1270" />
        <path d="M9 8.500c-1 3 1 6 5 6.500 2 .2 3-.5 5-1.500 0-2-3-.5-6-.5 1-2-1-4-4-4.500z" fill="#efefef" />
      </g>
    ),
  },
  {
    label: 'Slicer',
    running: true,
    art: (
      <g>
        <circle cx="10" cy="10" r="10" fill="#fff" />
        <path d="M5 13.500C4 7 8 3 15 4z" fill="#333" />
        <path d="M5.500 15.500 15.500 6c1 6-2 11-10 9.500z" fill="#f26a21" />
      </g>
    ),
  },
  {
    label: 'Bambu',
    running: true,
    art: (
      <g>
        <rect width="20" height="20" rx="3" fill="#0bad43" />
        <path d="M6 4h3.500v6L6 11.500zM6 12.500l3.500-1.500v5H6zM10.500 4H14v5.500L10.500 8zM10.500 9l3.500 1.500V16h-3.500z" fill="#fff" />
      </g>
    ),
  },
  {
    label: 'SOLIDWORKS 2025',
    running: true,
    active: true,
    art: (
      <g>
        <path d="M1 4l6-4 13 1v11l-3 4H1z" fill="#8e1118" />
        <path d="M1 4l14 1v10H1z" fill="#d3222b" />
        <text x="1" y="11" fontSize="9" fontWeight="700" fill="#fff">SW</text>
        <rect x="2" y="12" width="18" height="8" rx="2" fill="#111" />
        <text x="3" y="19" fontSize="7" fontWeight="700" fill="#fff">2025</text>
      </g>
    ),
  },
  {
    label: 'Bing',
    running: true,
    art: (
      <g>
        <path d="M4 0l4 1.500V16l-4 3z" fill="#1e9be8" />
        <path d="M4 19l4-3 4-2-2-5 6 3c2 2 0 4-2 5l-6 3c-2 .5-3 0-4-1z" fill="#1a6fe0" />
      </g>
    ),
  },
];

const Taskbar = () => (
  <footer className="grid h-[38px] shrink-0 grid-cols-[1fr_auto_1fr] items-center bg-[#efefef] text-[10px] text-[#222]">
    <div className="flex items-center pl-[17px]">
      <svg width="21" height="26" viewBox="0 0 21 26">
        <path d="M1 9h5M2 12h3M3.500 9v7" stroke="#6fb8e8" strokeWidth="1.500" />
        <path d="M11 10v9" stroke="#2d9be6" strokeWidth="3" />
        <circle cx="11" cy="20" r="3.500" fill="#1f8fe0" />
        <circle cx="14" cy="7" r="6.500" fill="#c42b1c" />
        <text x="14" y="10" fontSize="9" fill="#fff" textAnchor="middle">5</text>
      </svg>
      <div className="ml-[3px] leading-[14px]">
        <div>Feels colder</div>
        <div className="text-[#666]">Now</div>
      </div>
    </div>
    <div className="flex items-center pl-[2px]">
      <button aria-label="Start" className="flex w-[37px] justify-center">
        <svg width="20" height="20" viewBox="0 0 20 20">
          <path d="M0 0h9.500v9.500H0zM10.500 0H20v9.500h-9.500zM0 10.500h9.500V20H0zM10.500 10.500H20V20h-9.500z" fill="#1d8fe0" />
          <path d="M0 0h9.500v9.500H0z" fill="#4cbcf2" />
        </svg>
      </button>
      <label className="mx-[2px] flex h-[27px] w-[182px] items-center rounded-full border border-[#dedede] bg-white pr-[5px] pl-[9px]">
        <Search size={14} strokeWidth={2} />
        <input aria-label="Search" placeholder="Search" className="ml-[8px] min-w-0 flex-1 text-[12px] outline-none placeholder:text-[#666]" />
        <svg width="36" height="22" viewBox="0 0 36 22">
          <path d="M3 10V4l3 2M6 17v-6h5v5" fill="none" stroke="#444" />
          <circle cx="2" cy="10" r="1.300" fill="#444" />
          <circle cx="5" cy="17" r="1.300" fill="#444" />
          <circle cx="10" cy="16" r="1.300" fill="#444" />
          <path d="M32 8V3l3 2" fill="none" stroke="#444" />
          <circle cx="31" cy="8" r="1.300" fill="#444" />
          <ellipse cx="18" cy="6" rx="5" ry="6" fill="#b8823c" />
          <ellipse cx="17" cy="6" rx="3" ry="4" fill="#6e4418" />
          <path d="M21 10c3 0 4 2 3 4" stroke="#b8823c" strokeWidth="2" fill="none" />
          <path d="M14 14h13l1 7H13z" fill="#7a4a35" />
          <path d="M15 13h11v2H15z" fill="#333" />
        </svg>
      </label>
      {APPS.map((app) => (
        <button
          key={app.label}
          aria-label={app.label}
          className="relative flex h-[36px] w-[37px] items-center justify-center"
        >
          <span className={`flex h-[33px] w-[31px] items-center justify-center rounded-[3px] ${app.active ? 'bg-[#fafafa]' : ''}`}>
            <svg width="20" height="20" viewBox="0 0 20 20">{app.art}</svg>
          </span>
          {app.running && <span className={`absolute bottom-[1px] h-[2px] rounded-full ${app.active ? 'w-[13px] bg-[#1b7f8c]' : 'w-[5px] bg-[#8a8a8a]'}`} />}
        </button>
      ))}
      <button aria-label="Snipping Tool" className="relative flex h-[36px] w-[37px] items-center justify-center">
        <SnipIcon size={20} />
        <span className="absolute bottom-[1px] h-[2px] w-[5px] rounded-full bg-[#8a8a8a]" />
      </button>
    </div>
    <div className="flex items-center justify-end pr-[15px]">
      <ChevronUp size={13} strokeWidth={2} />
      <svg width="16" height="14" viewBox="0 0 16 14" className="ml-[13px]">
        <path d="M3.500 10.500a3 3 0 0 1 0-6C5 1 10 1 11.500 4.500c3 0 3.500 3 2 5z" fill="#9a9a9a" stroke="#555" />
        <circle cx="11" cy="9.500" r="4" fill="#c50f1f" />
        <path d="M9.500 8l3 3M12.500 8l-3 3" stroke="#fff" />
      </svg>
      <Wifi size={14} className="ml-[12px]" />
      <Volume2 size={14} strokeWidth={1.500} className="ml-[5px]" />
      <svg width="15" height="13" viewBox="0 0 15 13" className="ml-[7px]" fill="none" stroke="#333">
        <path d="M1 1.500h7v6c-2 0-3 .5-4 2C2 8 1 6 1 4z" />
        <path d="M8 2.500h6v5c0 2-2 4-4 4.500-2-.5-3-2-3-3.500M3 4l2 2 3-3" />
      </svg>
      <div className="ml-[11px] text-right leading-[14px]">
        <div>8:12 PM</div>
        <div>2/1/2026</div>
      </div>
    </div>
  </footer>
);

export default function App() {
  return (
    <div className="relative flex h-screen flex-col overflow-hidden bg-[#f7f7f7] font-['Open_Sans',sans-serif] text-black">
      <TitleBar />
      <Ribbon />
      <div className="flex min-h-0 flex-1">
        <div className="flex min-w-0 flex-1 flex-col bg-white">
          <div className="flex min-h-0 flex-1 flex-col bg-[radial-gradient(ellipse_420px_360px_at_100%_48%,#d9dde9_0%,#dde1ecb3_40%,transparent_100%),radial-gradient(ellipse_500px_300px_at_95%_0%,#e3e7f1_0%,transparent_100%),linear-gradient(to_bottom,transparent_38%,#dfe2ec_54%,transparent_64%,transparent_86%,#f3f5f9_100%)]">
            <RibbonTabs />
            <div className="flex min-h-0 flex-1">
              <div className="flex bg-[#f7f7f7]">
                <ToolColumn tools={FEATURE_TOOLS} className="w-[41px] border-r" />
                <ToolColumn tools={VIEW_TOOLS} className="w-[27px]" />
                <FeatureTree />
              </div>
              <Viewport />
            </div>
          </div>
          <BottomTabs />
        </div>
        <Marketplace />
      </div>
      <StatusBar />
      <Taskbar />
      <Notification />
    </div>
  );
}
